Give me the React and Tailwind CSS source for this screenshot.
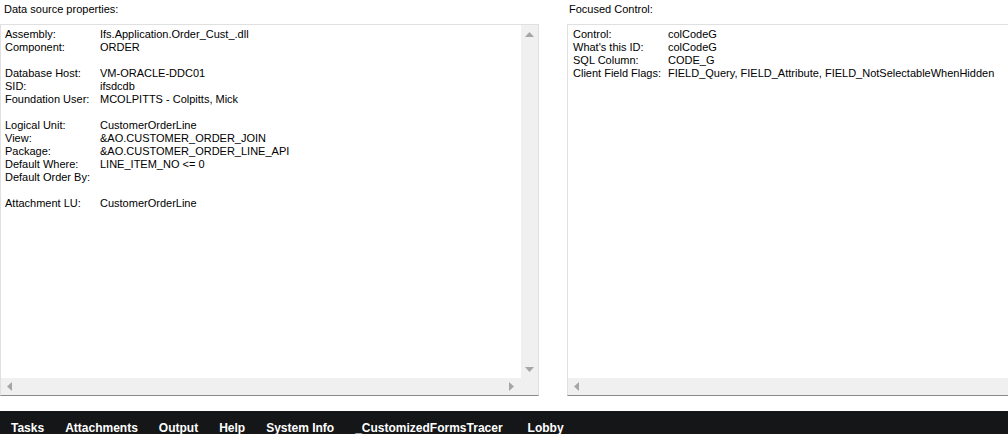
import React from 'react';

const leftRows = [
  ['Assembly:', 'Ifs.Application.Order_Cust_.dll'],
  ['Component:', 'ORDER'],
  null,
  ['Database Host:', 'VM-ORACLE-DDC01'],
  ['SID:', 'ifsdcdb'],
  ['Foundation User:', 'MCOLPITTS - Colpitts, Mick'],
  null,
  ['Logical Unit:', 'CustomerOrderLine'],
  ['View:', '&AO.CUSTOMER_ORDER_JOIN'],
  ['Package:', '&AO.CUSTOMER_ORDER_LINE_API'],
  ['Default Where:', 'LINE_ITEM_NO <= 0'],
  ['Default Order By:', ''],
  null,
  ['Attachment LU:', 'CustomerOrderLine'],
];

const rightRows = [
  ['Control:', 'colCodeG'],
  ["What's this ID:", 'colCodeG'],
  ['SQL Column:', 'CODE_G'],
  ['Client Field Flags:', 'FIELD_Query, FIELD_Attribute, FIELD_NotSelectableWhenHidden'],
];

const menu = ['Tasks', 'Attachments', 'Output', 'Help', 'System Info', '_CustomizedFormsTracer', 'Lobby'];

const Arrow = ({ dir }) => {
  const pts = {
    up: '0,5 4.5,0 9,5',
    down: '0,0 9,0 4.5,5',
    left: '5,0 5,9 0,4.5',
    right: '0,0 0,9 5,4.5',
  }[dir];
  const vertical = dir === 'up' || dir === 'down';
  return (
    <svg width={vertical ? 9 : 5} height={vertical ? 5 : 9} className="block">
      <polygon points={pts} fill="#a6a6a6" />
    </svg>
  );
};

const Rows = ({ rows }) => (
  <div className="leading-[13px]">
    {rows.map((r, i) =>
      r ? (
        <div key={i} className="flex whitespace-nowrap">
          <span className="w-[95px] shrink-0">{r[0]}</span>
          <span>{r[1]}</span>
        </div>
      ) : (
        <div key={i} className="h-[13px]" />
      )
    )}
  </div>
);

const App = () => {
  return (
    <div
      className="w-[1008px] h-[434px] overflow-hidden bg-white text-black flex flex-col"
      style={{ fontFamily: '"Liberation Sans", Arial, sans-serif' }}
    >
      <div className="flex gap-[28px] text-[11px]">
        <div className="w-[539px] shrink-0 flex flex-col">
          <div className="h-[24px] pl-[4px] pt-[3px] leading-[13px]">Data source properties:</div>
          <div className="h-[372px] border border-[#e0e0e0] border-b-[#8a8a8a] flex flex-col">
            <div className="flex flex-1 min-h-0">
              <div className="flex-1 pl-[4px] pt-[3px]">
                <Rows rows={leftRows} />
              </div>
              <div className="w-[17px] bg-[#f0f0f0] flex flex-col items-center justify-between pt-[7px] pb-[6px]">
                <Arrow dir="up" />
                <Arrow dir="down" />
              </div>
            </div>
            <div className="h-[17px] bg-[#f0f0f0] flex items-center">
              <div className="flex-1 flex items-center justify-between pl-[6px] pr-[7px]">
                <Arrow dir="left" />
                <Arrow dir="right" />
              </div>
              <div className="w-[17px]" />
            </div>
          </div>
        </div>
        <div className="flex-1 min-w-0 flex flex-col">
          <div className="h-[24px] pl-[2px] pt-[3px] leading-[13px]">Focused Control:</div>
          <div className="h-[372px] w-[460px] border border-[#e0e0e0] border-b-[#8a8a8a] flex flex-col">
            <div className="flex-1 pl-[5px] pt-[3px]">
              <Rows rows={rightRows} />
            </div>
            <div className="h-[17px] bg-[#f0f0f0] flex items-center px-[6px]">
              <Arrow dir="left" />
            </div>
          </div>
        </div>
      </div>
      <div className="flex-1" />
      <div className="h-[23px] bg-[#151618] flex items-end pl-[11px] gap-[21px] text-white font-bold text-[12px] leading-[14px]">
        {menu.map((m) => (
          <span key={m} className={`whitespace-nowrap -mb-[1px] ${m === 'Lobby' ? 'ml-[4px]' : ''}`}>{m}</span>
        ))}
      </div>
    </div>
  );
};

export default App;
